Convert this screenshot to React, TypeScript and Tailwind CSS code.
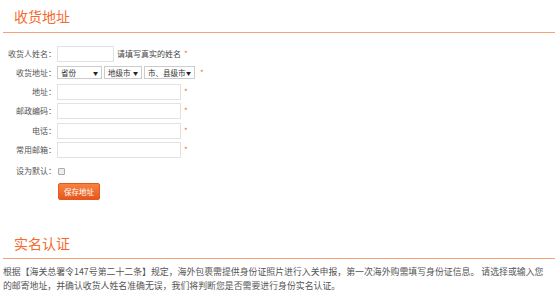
import React from 'react';

const font = { fontFamily: '"Noto Sans CJK SC", "Noto Sans", sans-serif' };

const Star = () => <span className="text-[#f46c3c] text-[8px] ml-[3px] leading-none">*</span>;

const Row = ({ label, children, h = 'h-[19.5px]' }: { label: string; children: React.ReactNode; h?: string }) => (
  <div className={`flex items-center ${h}`}>
    <div className="w-[57px] shrink-0 text-right text-[8px] text-[#555] pr-[1px]">{label}：</div>
    <div className="flex items-center">{children}</div>
  </div>
);

const Select = ({ label, w }: { label: string; w: string }) => (
  <div className={`${w} h-[13px] mr-[2px] border border-[#ccc] bg-white flex items-center justify-between px-[3px] text-[7.5px] text-[#333]`}>
    <span>{label}</span>
    <span className="text-[5px] text-[#222]">▼</span>
  </div>
);

const Input = ({ w = 'w-[124px]' }: { w?: string }) => (
  <div className={`${w} h-[16px] border border-[#e2e2e2] bg-white`} />
);

export default function App() {
  return (
    <div className="w-[558px] h-[299px] bg-white overflow-hidden" style={font}>
      <div className="pl-[14px] pt-[6px] h-[32px] text-[14px] leading-[20px] text-[#f56a2f]">收货地址</div>
      <div className="mx-[3px] h-[1px] bg-[#f7a07a]" />

      <div className="pt-[11px]">
        <Row label="收货人姓名" h="h-[19px]">
          <Input w="w-[57px]" />
          <span className="ml-[3px] text-[8px] text-[#444]">请填写真实的姓名</span>
          <Star />
        </Row>
        <Row label="收货地址" h="h-[19px]">
          <Select label="省份" w="w-[45px]" />
          <Select label="地级市" w="w-[38px]" />
          <Select label="市、县级市" w="w-[51px]" />
          <Star />
        </Row>
        <Row label="地址">
          <Input />
          <Star />
        </Row>
        <Row label="邮政编码">
          <Input />
          <Star />
        </Row>
        <Row label="电话">
          <Input />
          <Star />
        </Row>
        <Row label="常用邮箱">
          <Input />
          <Star />
        </Row>
        <Row label="设为默认" h="h-[22px]">
          <div className="w-[7px] h-[7px] border border-[#aaa] rounded-[1px] bg-[#eee] ml-[1px]" />
        </Row>
        <div className="pl-[58px] pt-[1px]">
          <button className="block w-[42px] h-[17px] rounded-[2px] bg-gradient-to-b from-[#f7823f] to-[#e8561d] border border-[#e05a20] text-white text-[7.5px] leading-none">
            保存地址
          </button>
        </div>
      </div>

      <div className="pl-[14px] pt-[33px] h-[58px] text-[14px] leading-[20px] text-[#f56a2f]">实名认证</div>
      <div className="mx-[3px] h-[1px] bg-[#f7a07a]" />
      <p className="pl-[3px] pr-[8px] pt-[6px] text-[8.9px] leading-[14px] text-[#555]">
        根据【海关总署令147号第二十二条】规定，海外包裹需提供身份证照片进行入关申报，第一次海外购需填写身份证信息。 请选择或输入您的邮寄地址，并确认收货人姓名准确无误，我们将判断您是否需要进行身份实名认证。
      </p>
    </div>
  );
}
